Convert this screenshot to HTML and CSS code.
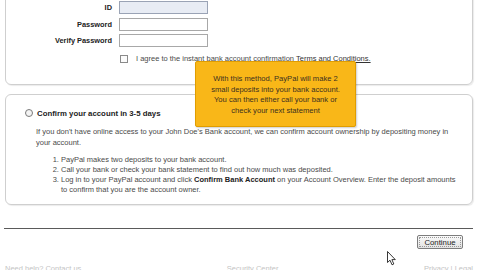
FILE: index.html
```html
<!DOCTYPE html>
<html>
<head>
<meta charset="utf-8">
<link rel="stylesheet" href="styles.css">
</head>
<body>
<div class="page">
  <div class="panel panel-top">
    <div class="form">
      <label class="lbl">ID</label>
      <div class="input input-id"></div>
      <label class="lbl">Password</label>
      <div class="input"></div>
      <label class="lbl">Verify Password</label>
      <div class="input"></div>
      <div></div>
      <div class="agree"><span class="checkbox"></span><span class="agree-text">I agree to the instant bank account confirmation <u>Terms and Conditions.</u></span></div>
    </div>
  </div>

  <div class="panel panel-bottom">
    <div class="heading"><span class="radio"></span><b>Confirm your account in 3-5 days</b></div>
    <p class="desc">If you don't have online access to your John Doe's Bank account, we can confirm account ownership by depositing money in your account.</p>
    <ol class="steps">
      <li>PayPal makes two deposits to your bank account.</li>
      <li>Call your bank or check your bank statement to find out how much was deposited.</li>
      <li>Log in to your PayPal account and click <b>Confirm Bank Account</b> on your Account Overview. Enter the deposit amounts to confirm that you are the account owner.</li>
    </ol>
  </div>

  <div class="rule"></div>
  <div class="actions"><button class="btn">Continue</button></div>
  <div class="footer"><span>Need help? Contact us</span><span>Security Center</span><span>Privacy | Legal</span></div>

  <div class="tooltip">With this method, PayPal will make 2 small deposits into your bank account. You can then either call your bank or check your next statement</div>

  <svg class="cursor" width="10" height="15" viewBox="0 0 10 15"><path d="M0.5 0.5 L0.5 11.5 L3 9.2 L5 13.8 L6.8 13 L4.9 8.6 L8.3 8.6 Z" fill="#fff" stroke="#222" stroke-width="0.9" stroke-linejoin="round"/></svg>
</div>
</body>
</html>
```

FILE: styles.css
```css
* { box-sizing: border-box; }
html, body { margin: 0; padding: 0; background: #fff; }
body {
  width: 480px;
  height: 270px;
  overflow: hidden;
  font-family: "Liberation Sans", Arial, sans-serif;
  font-size: 7.5px;
  color: #4a4a4a;
}
.page {
  position: relative;
  display: flow-root;
  padding: 0 7px 0 5px;
}
.panel {
  border: 1px solid #cfcfcf;
  border-radius: 6px;
  box-shadow: 1px 1px 1px rgba(0,0,0,0.08);
}
.panel-top {
  margin-top: -14px;
  padding: 14px 0 20px 0;
}
.form {
  display: grid;
  grid-template-columns: 106px 89px;
  column-gap: 7px;
  row-gap: 3.5px;
  align-items: center;
}
.lbl {
  text-align: right;
  font-weight: bold;
  color: #222;
  font-size: 7.4px;
}
.input {
  height: 13px;
  border: 1px solid #a8a8a8;
  background: #fff;
}
.input-id {
  background: #e8ecf4;
  border-color: #9aa3b5;
}
.agree {
  grid-column: 2 / span 1;
  display: flex;
  align-items: center;
  white-space: nowrap;
  margin-top: 3px;
  padding-left: 1px;
  line-height: 10px;
}
.checkbox {
  width: 8px;
  height: 8px;
  border: 1px solid #8a8a8a;
  background: #fbfbfb;
  margin-right: 8px;
  flex: none;
}
.agree-text { color: #4a4a4a; }
.agree-text u { color: #333; }
.panel-bottom {
  margin-top: 9px;
  padding: 13px 9px 8px 19px;
}
.heading {
  display: flex;
  align-items: center;
  line-height: 11px;
  font-size: 7.8px;
  color: #222;
}
.radio {
  width: 8px;
  height: 8px;
  border: 1px solid #7a7a7a;
  border-radius: 50%;
  background: #f4f4f4;
  margin-right: 4px;
  flex: none;
}
.desc {
  margin: 7px 0 0 11px;
  line-height: 11px;
}
.steps {
  margin: 7px 0 0 11px;
  padding-left: 25px;
  line-height: 10.3px;
}
.steps li { padding-left: 0; }
.steps b { color: #222; }
.rule {
  margin-top: 23px;
  height: 1.5px;
  background: #5a5a5a;
  margin-left: -1px;
}
.actions {
  display: flex;
  justify-content: flex-end;
  padding: 6px 10px 0 0;
}
.btn {
  font-family: "Liberation Sans", Arial, sans-serif;
  font-size: 7.8px;
  color: #222;
  width: 46px;
  height: 14px;
  padding: 0;
  border: 1px solid #7d7d7d;
  border-radius: 2px;
  background: linear-gradient(#fafafa, #e2e2e2);
  outline: 1px dotted #999;
  outline-offset: -3px;
}
.footer {
  display: flex;
  justify-content: space-between;
  margin-top: 15px;
  color: #c4c4c4;
  font-size: 7.5px;
}
.tooltip {
  position: absolute;
  left: 195px;
  top: 61px;
  width: 161px;
  height: 66px;
  padding: 12px 9px 0 9px;
  background: #f9b718;
  border: 1px solid #e09d00;
  border-radius: 2px;
  box-shadow: 1px 1px 2px rgba(0,0,0,0.2);
  color: #3b3020;
  text-align: center;
  line-height: 10.6px;
  font-size: 7.6px;
}
.cursor {
  position: absolute;
  left: 387px;
  top: 251px;
}
```
